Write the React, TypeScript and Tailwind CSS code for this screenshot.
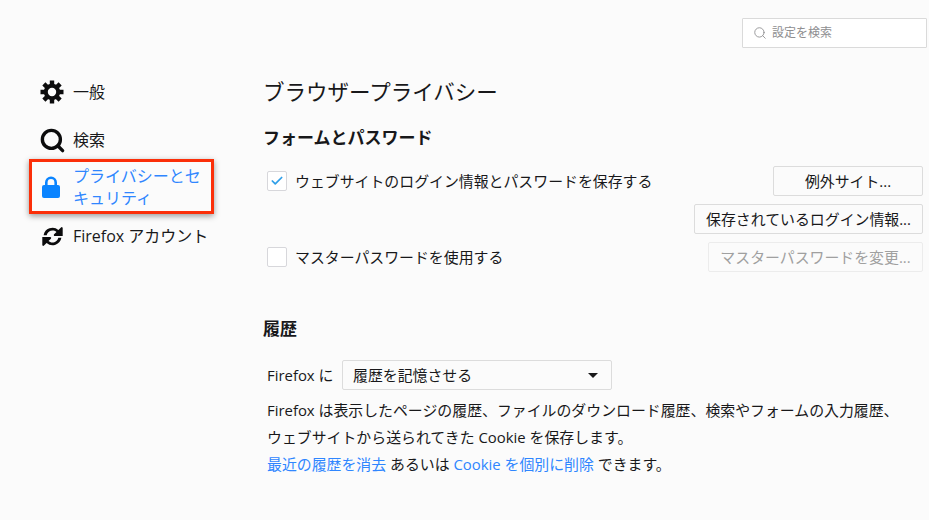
import { Check, Search } from "lucide-react";

const font = { fontFamily: '"Open Sans", "Noto Sans CJK JP", sans-serif' };

const GearIcon = () => (
  <svg width="24" height="24" viewBox="0 0 24 24" fill="none" stroke="#0c0c0d">
    <circle cx="12" cy="12" r="6.2" strokeWidth="4" />
    {[0, 45, 90, 135].map((angle) => (
      <path key={angle} d="M12 .5v23" strokeWidth="4.4" transform={`rotate(${angle} 12 12)`} strokeDasharray="5 13 5" />
    ))}
  </svg>
);

const LockIcon = () => (
  <svg width="18" height="22" viewBox="0 0 18 22" fill="#0a84ff">
    <path d="M3 9V6.5a6 6 0 0 1 12 0V9h1a2 2 0 0 1 2 2v9a2 2 0 0 1-2 2H2a2 2 0 0 1-2-2v-9a2 2 0 0 1 2-2zm2.6 0h6.8V6.5a3.4 3.4 0 0 0-6.8 0z" />
  </svg>
);

const SyncIcon = () => (
  <svg width="23" height="23" viewBox="0 0 23 23" fill="#0c0c0d">
    <path d="M2.6 10.2a9 9 0 0 1 14.8-5.2L20 2.4a1 1 0 0 1 1.7.7V11h-7.9a1 1 0 0 1-.7-1.7l2.4-2.4a6 6 0 0 0-9.8 3.3z" />
    <path d="M20.4 12.8a9 9 0 0 1-14.8 5.2L3 20.6a1 1 0 0 1-1.7-.7V12h7.9a1 1 0 0 1 .7 1.7l-2.4 2.4a6 6 0 0 0 9.8-3.3z" />
  </svg>
);

const OutlineButton = ({ label, width, disabled = false }: { label: string; width: string; disabled?: boolean }) => (
  <button
    className={`h-[30px] ${width} shrink-0 rounded-[2px] border text-center text-[14.9px] leading-[28px] whitespace-nowrap ${
      disabled ? "border-[#ececec] text-[#a0a0a0]" : "border-[#dcdcdc] text-[#18181a]"
    }`}
  >
    {label}
  </button>
);

export default function App() {
  return (
    <div className="h-[520px] w-[929px] overflow-hidden bg-[#fbfbfb] text-[#18181a]" style={font}>
      <div className="flex justify-end pr-[2px] pt-[18px]">
        <div className="flex h-[30px] w-[185px] items-center gap-[5px] rounded-[1px] border border-[#dadada] bg-white pl-[10px] text-[12px] text-[#8e8e90]">
          <Search size={14} strokeWidth={1.5} />
          <span>設定を検索</span>
        </div>
      </div>

      <div className="flex pt-[27px]">
        <aside className="w-[264px] shrink-0 pl-[29px] text-[16px]">
          <div className="flex h-[34px] items-center gap-[9px] pl-[11px]">
            <GearIcon />
            <span>一般</span>
          </div>
          <div className="mt-[14px] flex h-[34px] items-center gap-[7px] pl-[10px]">
            <Search size={27} strokeWidth={3} className="text-[#0c0c0d]" />
            <span>検索</span>
          </div>
          <div className="mt-[2px] flex h-[55px] w-[185px] items-center gap-[13px] border-[3px] border-[#fb2f09] pl-[10px] text-[#2f86ff] shadow-[0_2px_6px_rgba(0,0,0,0.4)]">
            <LockIcon />
            <span className="w-[130px] text-[16px] leading-[22px]">プライバシーとセキュリティ</span>
          </div>
          <div className="mt-[5px] flex h-[34px] items-center gap-[9px] pl-[12px]">
            <SyncIcon />
            <span className="whitespace-nowrap">Firefox アカウント</span>
          </div>
        </aside>

        <main className="min-w-0 flex-1 pr-[6px]">
          <h1 className="-ml-[1px] h-[34px] text-[21.5px] leading-[34px]">ブラウザープライバシー</h1>
          <h2 className="mt-[17px] -ml-[1px] text-[17px] leading-[24px] font-bold">フォームとパスワード</h2>

          <div className="mt-[16px] flex h-[30px] items-center pl-[3px]">
            <span className="flex h-[20px] w-[20px] items-center justify-center rounded-[2px] border border-[#d7d7db] bg-white">
              <Check size={14} strokeWidth={3} className="text-[#2f9fe8]" />
            </span>
            <span className="ml-[8px] flex-1 text-[14.9px]">ウェブサイトのログイン情報とパスワードを保存する</span>
            <OutlineButton label="例外サイト..." width="w-[150px]" />
          </div>
          <div className="mt-[8px] flex justify-end">
            <OutlineButton label="保存されているログイン情報..." width="w-[229px]" />
          </div>
          <div className="mt-[8px] flex h-[30px] items-center pl-[3px]">
            <span className="h-[20px] w-[20px] rounded-[2px] border border-[#d7d7db] bg-white" />
            <span className="ml-[8px] flex-1 text-[14.9px]">マスターパスワードを使用する</span>
            <OutlineButton label="マスターパスワードを変更..." width="w-[215px]" disabled />
          </div>

          <h2 className="mt-[45px] -ml-[1px] text-[17px] leading-[24px] font-bold">履歴</h2>

          <div className="mt-[19px] flex h-[30px] items-center pl-[3px] text-[14.9px]">
            <span className="w-[75px]">Firefox に</span>
            <div className="flex h-[30px] w-[270px] items-center justify-between rounded-[2px] border border-[#dcdcdc] pr-[13px] pl-[10px]">
              <span>履歴を記憶させる</span>
              <span className="h-0 w-0 border-x-[5px] border-t-[5px] border-x-transparent border-t-[#18181a]" />
            </div>
          </div>

          <div className="mt-[7px] pl-[3px] text-[14.9px] leading-[27px] whitespace-nowrap">
            <p>Firefox は表示したページの履歴、ファイルのダウンロード履歴、検索やフォームの入力履歴、</p>
            <p>ウェブサイトから送られてきた Cookie を保存します。</p>
            <p>
              <span className="text-[#2f86ff]">最近の履歴を消去</span> あるいは{" "}
              <span className="text-[#2f86ff]">Cookie を個別に削除</span> できます。
            </p>
          </div>
        </main>
      </div>
    </div>
  );
}
